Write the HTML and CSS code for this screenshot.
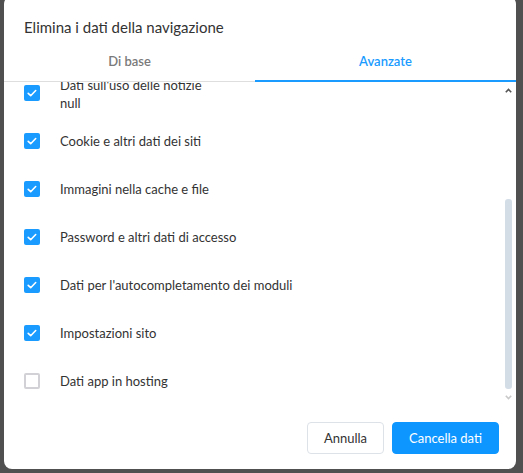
FILE: index.html
```html
<!DOCTYPE html>
<html lang="it">
<head>
    <meta charset="UTF-8">
    <meta name="viewport" content="width=device-width, initial-scale=1.0">
    <title>Elimina i dati della navigazione</title>
    <link rel="stylesheet" href="styles.css">
</head>
<body>
    <div class="dialog">
        <h1 class="title">Elimina i dati della navigazione</h1>

        <div class="tabs">
            <div class="tab">Di base</div>
            <div class="tab active">Avanzate</div>
        </div>

        <div class="body">
            <ul class="list">
                <li class="item first">
                    <span class="box checked"><svg viewBox="0 0 16 16"><path d="M4.2 8.3l2.5 2.4 5-5.2"/></svg></span>
                    <div class="label">Dati sull'uso delle notizie<span class="sub">null</span></div>
                </li>
                <li class="item">
                    <span class="box checked"><svg viewBox="0 0 16 16"><path d="M4.2 8.3l2.5 2.4 5-5.2"/></svg></span>
                    <div class="label">Cookie e altri dati dei siti</div>
                </li>
                <li class="item">
                    <span class="box checked"><svg viewBox="0 0 16 16"><path d="M4.2 8.3l2.5 2.4 5-5.2"/></svg></span>
                    <div class="label">Immagini nella cache e file</div>
                </li>
                <li class="item">
                    <span class="box checked"><svg viewBox="0 0 16 16"><path d="M4.2 8.3l2.5 2.4 5-5.2"/></svg></span>
                    <div class="label">Password e altri dati di accesso</div>
                </li>
                <li class="item">
                    <span class="box checked"><svg viewBox="0 0 16 16"><path d="M4.2 8.3l2.5 2.4 5-5.2"/></svg></span>
                    <div class="label">Dati per l'autocompletamento dei moduli</div>
                </li>
                <li class="item">
                    <span class="box checked"><svg viewBox="0 0 16 16"><path d="M4.2 8.3l2.5 2.4 5-5.2"/></svg></span>
                    <div class="label">Impostazioni sito</div>
                </li>
                <li class="item">
                    <span class="box"></span>
                    <div class="label">Dati app in hosting</div>
                </li>
            </ul>

            <div class="scrollbar">
                <svg class="arrow up" viewBox="0 0 7 5"><path d="M0.8 4.2L3.5 1.4 6.2 4.2"/></svg>
                <div class="track"><div class="thumb"></div></div>
                <svg class="arrow down" viewBox="0 0 7 5"><path d="M0.8 0.8L3.5 3.6 6.2 0.8"/></svg>
            </div>
        </div>

        <div class="footer">
            <button class="btn">Annulla</button>
            <button class="btn primary">Cancella dati</button>
        </div>
    </div>
</body>
</html>
```

FILE: styles.css
```css
body {
    margin: 0;
    padding: 0;
    background: #505050;
    font-family: Lato, "Noto Sans", Arial, sans-serif;
    color: #333;
    overflow: hidden;
}

.dialog {
    width: 512px;
    height: 473px;
    margin: -4px 0 0 4px;
    background: #fff;
    border-radius: 8px;
    display: flex;
    flex-direction: column;
}

.title {
    margin: 0;
    padding: 21px 20px 0;
    font-size: 15px;
    font-weight: normal;
    line-height: 20px;
    color: #333;
}

.tabs {
    display: flex;
    border-bottom: 1px solid #dedede;
}

.tab {
    flex: 1;
    text-align: center;
    padding: 15px 0 11px;
    font-size: 13px;
    line-height: 18px;
    font-weight: 600;
    color: #7a7a7a;
}

.tab:first-child {
    flex: 0 0 251px;
}

.tab.active {
    color: #1a9bff;
    border-bottom: 2px solid #1a9bff;
    padding-bottom: 10px;
    margin-bottom: -1px;
}

.body {
    height: 323px;
    display: flex;
    padding-right: 4px;
}

.list {
    flex: 1;
    list-style: none;
    margin: 0;
    padding: 0 0 0 20px;
    overflow: hidden;
}

.item {
    height: 48px;
    display: flex;
    align-items: center;
    font-size: 13px;
    line-height: 18px;
}

.item.first {
    margin-top: -13px;
}

.item.first .label {
    margin-top: 1px;
}

.box {
    width: 16px;
    height: 16px;
    box-sizing: border-box;
    border: 2px solid #d2d2d6;
    border-radius: 2px;
    margin-right: 20px;
    flex-shrink: 0;
}

.box.checked {
    border: none;
    background: #1a9bff;
}

.box svg {
    display: block;
    width: 16px;
    height: 16px;
}

.box svg path {
    fill: none;
    stroke: #fff;
    stroke-width: 1.6;
    stroke-linecap: round;
    stroke-linejoin: round;
}

.label .sub {
    display: block;
}

.scrollbar {
    width: 7px;
    display: flex;
    flex-direction: column;
    padding: 6px 0 5px;
}

.arrow {
    display: block;
    width: 7px;
    height: 5px;
}

.arrow path {
    fill: none;
    stroke-width: 1.6;
}

.arrow.up path {
    stroke: #555;
}

.arrow.down path {
    stroke: #c9c9c9;
}

.track {
    flex: 1;
}

.thumb {
    margin-top: 106px;
    height: 190px;
    background: #d3dde6;
    border-radius: 3px;
}

.footer {
    display: flex;
    justify-content: flex-end;
    gap: 8px;
    padding: 17px 17px 0;
}

.btn {
    height: 32px;
    padding: 0 16px;
    font-family: inherit;
    font-size: 13px;
    color: #333;
    background: #fff;
    border: 1px solid #dde2e8;
    border-radius: 4px;
}

.btn.primary {
    color: #fff;
    background: #0d96ff;
    border-color: #0d96ff;
}
```
